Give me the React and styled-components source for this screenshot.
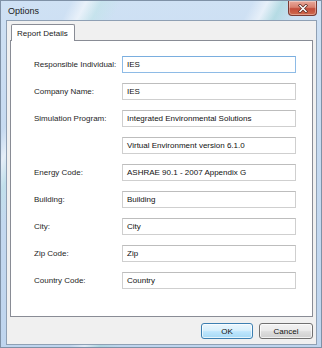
import React from "react";
import styled, { createGlobalStyle } from "styled-components";

const GlobalStyle = createGlobalStyle`
  html, body { margin: 0; padding: 0; background: #ffffff; }
  body { font-family: "Liberation Sans", Arial, sans-serif; }
  * { box-sizing: border-box; }
`;

const Window = styled.div`
  width: 322px;
  height: 348px;
  border: 1px solid #7f91a6;
  padding: 0 4px 2px 5px;
  display: flex;
  flex-direction: column;
  background:
    linear-gradient(118deg, transparent 14%, rgba(255,255,255,0.55) 17%, rgba(190,230,230,0.5) 20%, transparent 24%),
    linear-gradient(118deg, transparent 50%, rgba(255,255,255,0.5) 53%, rgba(160,215,215,0.55) 56%, transparent 60%),
    linear-gradient(to bottom, #cfe1f4 0%, #c6daf0 40%, #bfd5ee 100%);
`;

const TitleBar = styled.div`
  height: 19px;
  display: flex;
  align-items: center;
  position: relative;
`;

const Title = styled.span`
  font-size: 9px;
  color: #1b1b1b;
  padding-left: 2px;
  padding-top: 1px;
`;

const CloseButton = styled.div`
  margin-left: auto;
  margin-right: 0;
  align-self: flex-start;
  width: 29px;
  height: 15px;
  border: 1px solid #7a3a33;
  border-top: none;
  border-radius: 0 0 4px 4px;
  background: linear-gradient(to bottom, #e9a99c 0%, #d8806f 45%, #c24c3a 55%, #cf6a4f 100%);
  display: flex;
  align-items: center;
  justify-content: center;
  box-shadow: inset 0 0 0 1px rgba(255,255,255,0.35);
`;

const Client = styled.div`
  flex: 1;
  border: 1px solid #8fa0b4;
  background: #f0f0f0;
  padding: 3px 3px 5px 3px;
  display: flex;
  flex-direction: column;
`;

const TabStrip = styled.div`
  height: 16px;
  display: flex;
  padding-left: 1px;
`;

const Tab = styled.div`
  height: 17px;
  padding: 0 6px 0 5px;
  border: 1px solid #898c95;
  border-bottom: none;
  border-radius: 2px 2px 0 0;
  background: #ffffff;
  font-size: 8px;
  color: #1b1b1b;
  display: flex;
  align-items: center;
  position: relative;
  z-index: 1;
`;

const Panel = styled.div`
  height: 277px;
  border: 1px solid #898c95;
  background: #ffffff;
  padding: 15px 0 0 23px;
`;

const Form = styled.div`
  display: grid;
  grid-template-columns: 88px 174px;
  grid-auto-rows: 17px;
  row-gap: 10px;
  align-items: center;
`;

const Label = styled.label`
  font-size: 8px;
  color: #1e1e1e;
  white-space: nowrap;
`;

const Field = styled.div`
  grid-column: 2;
  height: 17px;
  border: 1px solid ${(p) => (p.$focused ? "#8ebbe6" : "#cfcfcf")};
  border-top-color: ${(p) => (p.$focused ? "#7aaedf" : "#bdbdbd")};
  background: #ffffff;
  padding: 0 4px;
  font-size: 8px;
  color: #111111;
  display: flex;
  align-items: center;
  white-space: nowrap;
  overflow: hidden;
`;

const ButtonRow = styled.div`
  margin-top: 6px;
  display: flex;
  justify-content: flex-end;
  gap: 6px;
  padding-right: 0;
`;

const Button = styled.div`
  width: ${(p) => (p.$default ? "52px" : "54px")};
  height: 16px;
  border: 1px solid ${(p) => (p.$default ? "#3c7fb1" : "#707070")};
  border-radius: 3px;
  background: ${(p) =>
    p.$default
      ? "linear-gradient(to bottom, #eaf6fd 0%, #d9f0fc 45%, #bee6fd 55%, #a7d9f5 100%)"
      : "linear-gradient(to bottom, #f2f2f2 0%, #ebebeb 45%, #dddddd 55%, #cfcfcf 100%)"};
  box-shadow: inset 0 0 0 1px rgba(255,255,255,0.7);
  font-size: 8px;
  color: #111111;
  display: flex;
  align-items: center;
  justify-content: center;
`;

const fields = [
  { label: "Responsible Individual:", value: "IES", focused: true },
  { label: "Company Name:", value: "IES" },
  { label: "Simulation Program:", value: "Integrated Environmental Solutions" },
  { label: "", value: "Virtual Environment version 6.1.0" },
  { label: "Energy Code:", value: "ASHRAE 90.1 - 2007 Appendix G" },
  { label: "Building:", value: "Building" },
  { label: "City:", value: "City" },
  { label: "Zip Code:", value: "Zip" },
  { label: "Country Code:", value: "Country" },
];

export default function App() {
  return (
    <>
      <GlobalStyle />
      <Window>
        <TitleBar>
          <Title>Options</Title>
          <CloseButton>
            <svg width="10" height="9" viewBox="0 0 10 9">
              <path d="M2 1.5 L8 7.5 M8 1.5 L2 7.5" stroke="#5a2a24" strokeWidth="3" strokeLinecap="square" />
              <path d="M2 1.5 L8 7.5 M8 1.5 L2 7.5" stroke="#ffffff" strokeWidth="1.5" strokeLinecap="square" />
            </svg>
          </CloseButton>
        </TitleBar>
        <Client>
          <TabStrip>
            <Tab>Report Details</Tab>
          </TabStrip>
          <Panel>
            <Form>
              {fields.map((f, i) => (
                <React.Fragment key={i}>
                  {f.label ? <Label>{f.label}</Label> : null}
                  <Field $focused={f.focused}>{f.value}</Field>
                </React.Fragment>
              ))}
            </Form>
          </Panel>
          <ButtonRow>
            <Button $default>OK</Button>
            <Button>Cancel</Button>
          </ButtonRow>
        </Client>
      </Window>
    </>
  );
}
